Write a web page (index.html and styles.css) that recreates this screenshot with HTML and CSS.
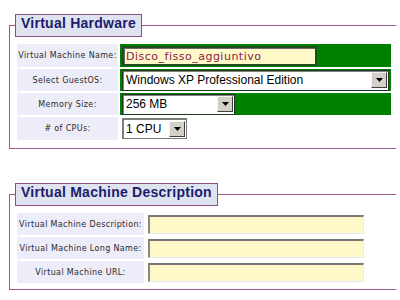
FILE: index.html
```html
<!doctype html>
<html lang="en">
<head>
    <meta charset="UTF-8">
    <title>Virtual Machine settings</title>
    <link rel="stylesheet" href="styles.css">
</head>
<body>
    <fieldset class="group group-hw">
        <legend>Virtual Hardware</legend>
        <table class="form form-hw">
            <tr class="row-tall">
                <th>Virtual Machine Name:</th>
                <td class="ok"><input class="field field-name" type="text" value="Disco_fisso_aggiuntivo"></td>
            </tr>
            <tr>
                <th>Select GuestOS:</th>
                <td class="ok">
                    <div class="select select-os">
                        <span class="select-value">Windows XP Professional Edition</span>
                        <span class="select-btn"><svg width="7" height="4" viewBox="0 0 7 4"><path d="M0 0h7L3.5 4z"/></svg></span>
                    </div>
                </td>
            </tr>
            <tr>
                <th>Memory Size:</th>
                <td class="ok">
                    <div class="select select-mem">
                        <span class="select-value">256 MB</span>
                        <span class="select-btn"><svg width="7" height="4" viewBox="0 0 7 4"><path d="M0 0h7L3.5 4z"/></svg></span>
                    </div>
                </td>
            </tr>
            <tr class="row-tall">
                <th># of CPUs:</th>
                <td>
                    <div class="select select-cpu">
                        <span class="select-value">1 CPU</span>
                        <span class="select-btn"><svg width="7" height="4" viewBox="0 0 7 4"><path d="M0 0h7L3.5 4z"/></svg></span>
                    </div>
                </td>
            </tr>
        </table>
    </fieldset>

    <fieldset class="group group-desc">
        <legend>Virtual Machine Description</legend>
        <table class="form form-desc">
            <tr>
                <th>Virtual Machine Description:</th>
                <td><input class="field field-text" type="text"></td>
            </tr>
            <tr>
                <th>Virtual Machine Long Name:</th>
                <td><input class="field field-text" type="text"></td>
            </tr>
            <tr>
                <th>Virtual Machine URL:</th>
                <td><input class="field field-text" type="text"></td>
            </tr>
        </table>
    </fieldset>
</body>
</html>
```

FILE: styles.css
```css
body {
    margin: 0;
    background-color: #fff;
    color: #222;
    font-family: "DejaVu Sans", Verdana, sans-serif;
}

.group {
    box-sizing: border-box;
    width: 387px;
    margin: 14px 0 0 9px;
    padding: 5px 3px 6px 5px;
    border: 1px solid #9c5a8c;
    border-right: 0;
    min-width: 0;
}

.group-desc {
    margin-top: 34px;
    padding-bottom: 4px;
}

.group legend {
    box-sizing: border-box;
    height: 23px;
    padding: 0 5px;
    line-height: 21px;
    border: 1px solid #8e4f80;
    background-color: #dfe3f0;
    color: #1b1b6e;
    font: bold 14px "Liberation Sans", Arial, sans-serif;
    letter-spacing: 0.25px;
}

.form {
    border-spacing: 2px;
    width: 378px;
}

.form tr {
    height: 22px;
}

.form .row-tall {
    height: 23px;
}

.form th {
    padding: 0;
    background-color: #ededf9;
    color: #2a2a2a;
    font-size: 8px;
    font-weight: normal;
    letter-spacing: 0.35px;
    text-align: center;
    white-space: nowrap;
}

.form-hw th {
    width: 101px;
}

.form-desc th {
    width: 127px;
}

.form td {
    padding: 0 2px;
    vertical-align: middle;
}

.form td.ok {
    background-color: #008000;
}

.field {
    display: block;
    box-sizing: border-box;
    margin: 0;
    padding: 0 2px;
    background-color: #fff8c8;
    font-family: "DejaVu Sans", Verdana, sans-serif;
}

.field-name {
    width: 195px;
    height: 20px;
    padding-top: 1px;
    border: 2px solid #1e4e1e;
    box-shadow: inset 1px 1px 0 #6a6a6a;
    color: #8b1a4a;
    font-size: 11px;
    line-height: 15px;
    letter-spacing: 0.5px;
}

.field-text {
    width: 216px;
    height: 19px;
    border-style: solid;
    border-width: 2px 1px 1px 2px;
    border-color: #777 #ebe6f2 #ebe6f2 #888;
}

.select {
    display: flex;
    align-items: center;
    box-sizing: border-box;
    height: 21px;
    padding: 0 1px 0 3px;
    border: 1px solid #1d3a1d;
    box-shadow: inset 1px 1px 0 #808080;
    background-color: #fff;
    color: #000;
    font: 12px "Liberation Sans", Arial, sans-serif;
}

.select-os {
    width: 267px;
}

.select-mem {
    width: 113px;
}

.select-cpu {
    width: 65px;
    border-color: #7a7a7a;
}

.select-value {
    flex: 1;
    white-space: nowrap;
}

.select-btn {
    display: flex;
    align-items: center;
    justify-content: center;
    box-sizing: border-box;
    width: 16px;
    height: 16px;
    border: 1px solid;
    border-color: #f4f4f4 #404040 #404040 #f4f4f4;
    background-color: #d4d0c8;
}
```
